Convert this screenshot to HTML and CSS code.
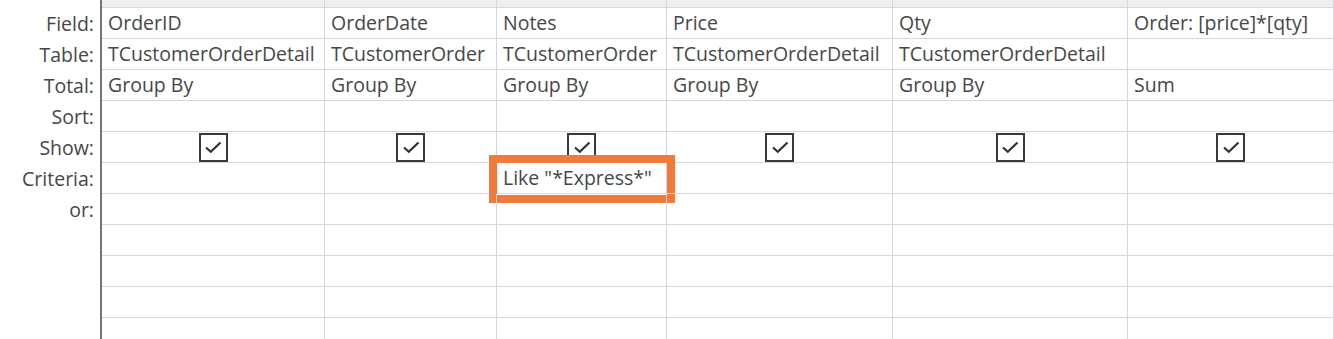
FILE: index.html
```html
<!DOCTYPE html>
<html>
<head>
<meta charset="utf-8">
<link rel="stylesheet" href="styles.css">
</head>
<body>
<div class="designer">
  <div class="labels">
    <div class="band-spacer"></div>
    <div class="label">Field:</div>
    <div class="label">Table:</div>
    <div class="label">Total:</div>
    <div class="label">Sort:</div>
    <div class="label">Show:</div>
    <div class="label">Criteria:</div>
    <div class="label">or:</div>
  </div>
  <div class="grid">
    <div class="band"></div><div class="band"></div><div class="band"></div><div class="band"></div><div class="band"></div><div class="band"></div>

    <div class="cell">OrderID</div><div class="cell">OrderDate</div><div class="cell">Notes</div><div class="cell">Price</div><div class="cell">Qty</div><div class="cell">Order: [price]*[qty]</div>

    <div class="cell">TCustomerOrderDetail</div><div class="cell">TCustomerOrder</div><div class="cell">TCustomerOrder</div><div class="cell">TCustomerOrderDetail</div><div class="cell">TCustomerOrderDetail</div><div class="cell"></div>

    <div class="cell">Group By</div><div class="cell">Group By</div><div class="cell">Group By</div><div class="cell">Group By</div><div class="cell">Group By</div><div class="cell">Sum</div>

    <div class="cell"></div><div class="cell"></div><div class="cell"></div><div class="cell"></div><div class="cell"></div><div class="cell"></div>

    <div class="cell check"><span class="box"><svg viewBox="0 0 24 24" width="24" height="24"><path d="M5 12.5 L9.8 16.8 L19.5 7.5" fill="none" stroke="#333" stroke-width="2.2"/></svg></span></div>
    <div class="cell check"><span class="box"><svg viewBox="0 0 24 24" width="24" height="24"><path d="M5 12.5 L9.8 16.8 L19.5 7.5" fill="none" stroke="#333" stroke-width="2.2"/></svg></span></div>
    <div class="cell check"><span class="box"><svg viewBox="0 0 24 24" width="24" height="24"><path d="M5 12.5 L9.8 16.8 L19.5 7.5" fill="none" stroke="#333" stroke-width="2.2"/></svg></span></div>
    <div class="cell check"><span class="box"><svg viewBox="0 0 24 24" width="24" height="24"><path d="M5 12.5 L9.8 16.8 L19.5 7.5" fill="none" stroke="#333" stroke-width="2.2"/></svg></span></div>
    <div class="cell check"><span class="box"><svg viewBox="0 0 24 24" width="24" height="24"><path d="M5 12.5 L9.8 16.8 L19.5 7.5" fill="none" stroke="#333" stroke-width="2.2"/></svg></span></div>
    <div class="cell check"><span class="box"><svg viewBox="0 0 24 24" width="24" height="24"><path d="M5 12.5 L9.8 16.8 L19.5 7.5" fill="none" stroke="#333" stroke-width="2.2"/></svg></span></div>

    <div class="cell"></div><div class="cell"></div><div class="cell highlighted">Like "*Express*"<span class="highlight"></span></div><div class="cell"></div><div class="cell"></div><div class="cell"></div>

    <div class="cell"></div><div class="cell"></div><div class="cell"></div><div class="cell"></div><div class="cell"></div><div class="cell"></div>
    <div class="cell"></div><div class="cell"></div><div class="cell"></div><div class="cell"></div><div class="cell"></div><div class="cell"></div>
    <div class="cell"></div><div class="cell"></div><div class="cell"></div><div class="cell"></div><div class="cell"></div><div class="cell"></div>
    <div class="cell"></div><div class="cell"></div><div class="cell"></div><div class="cell"></div><div class="cell"></div><div class="cell"></div>
    <div class="cell"></div><div class="cell"></div><div class="cell"></div><div class="cell"></div><div class="cell"></div><div class="cell"></div>
  </div>
</div>
</body>
</html>
```
FILE: styles.css
```css
html, body {
  margin: 0;
  padding: 0;
  background: #ffffff;
  overflow: hidden;
}
body {
  width: 1334px;
  height: 339px;
  font-family: "Open Sans", "Noto Sans", sans-serif;
  font-size: 19.5px;
  color: #474747;
}
.designer {
  display: flex;
  height: 339px;
  overflow: hidden;
}
.labels {
  width: 100px;
  flex: none;
  display: flex;
  flex-direction: column;
}
.band-spacer {
  height: 8px;
}
.label {
  height: 31px;
  line-height: 31px;
  text-align: right;
  padding-right: 6px;
}
.grid {
  flex: 1;
  border-left: 2px solid #767676;
  display: grid;
  grid-template-columns: 223px 172px 170px 226px 235px 1fr;
  grid-template-rows: 8px;
  grid-auto-rows: 31px;
  align-content: start;
}
.band {
  background: #efeff1;
  border-bottom: 1px solid #d6d6de;
  border-right: 1px solid #d6d6de;
}
.cell {
  border-bottom: 1px solid #d6d6de;
  border-right: 1px solid #d6d6de;
  padding-left: 6px;
  line-height: 30px;
  white-space: nowrap;
  overflow: visible;
  position: relative;
}
.check {
  display: flex;
  align-items: center;
  justify-content: center;
  padding-left: 0;
}
.box {
  width: 25px;
  height: 25px;
  border: 2px solid #3a3a3a;
  display: flex;
  align-items: center;
  justify-content: center;
  background: #fff;
}
.highlight {
  position: absolute;
  left: -8px;
  top: -8px;
  right: -9px;
  bottom: -10px;
  border: 8px solid #ef7a3b;
  pointer-events: none;
}
```
